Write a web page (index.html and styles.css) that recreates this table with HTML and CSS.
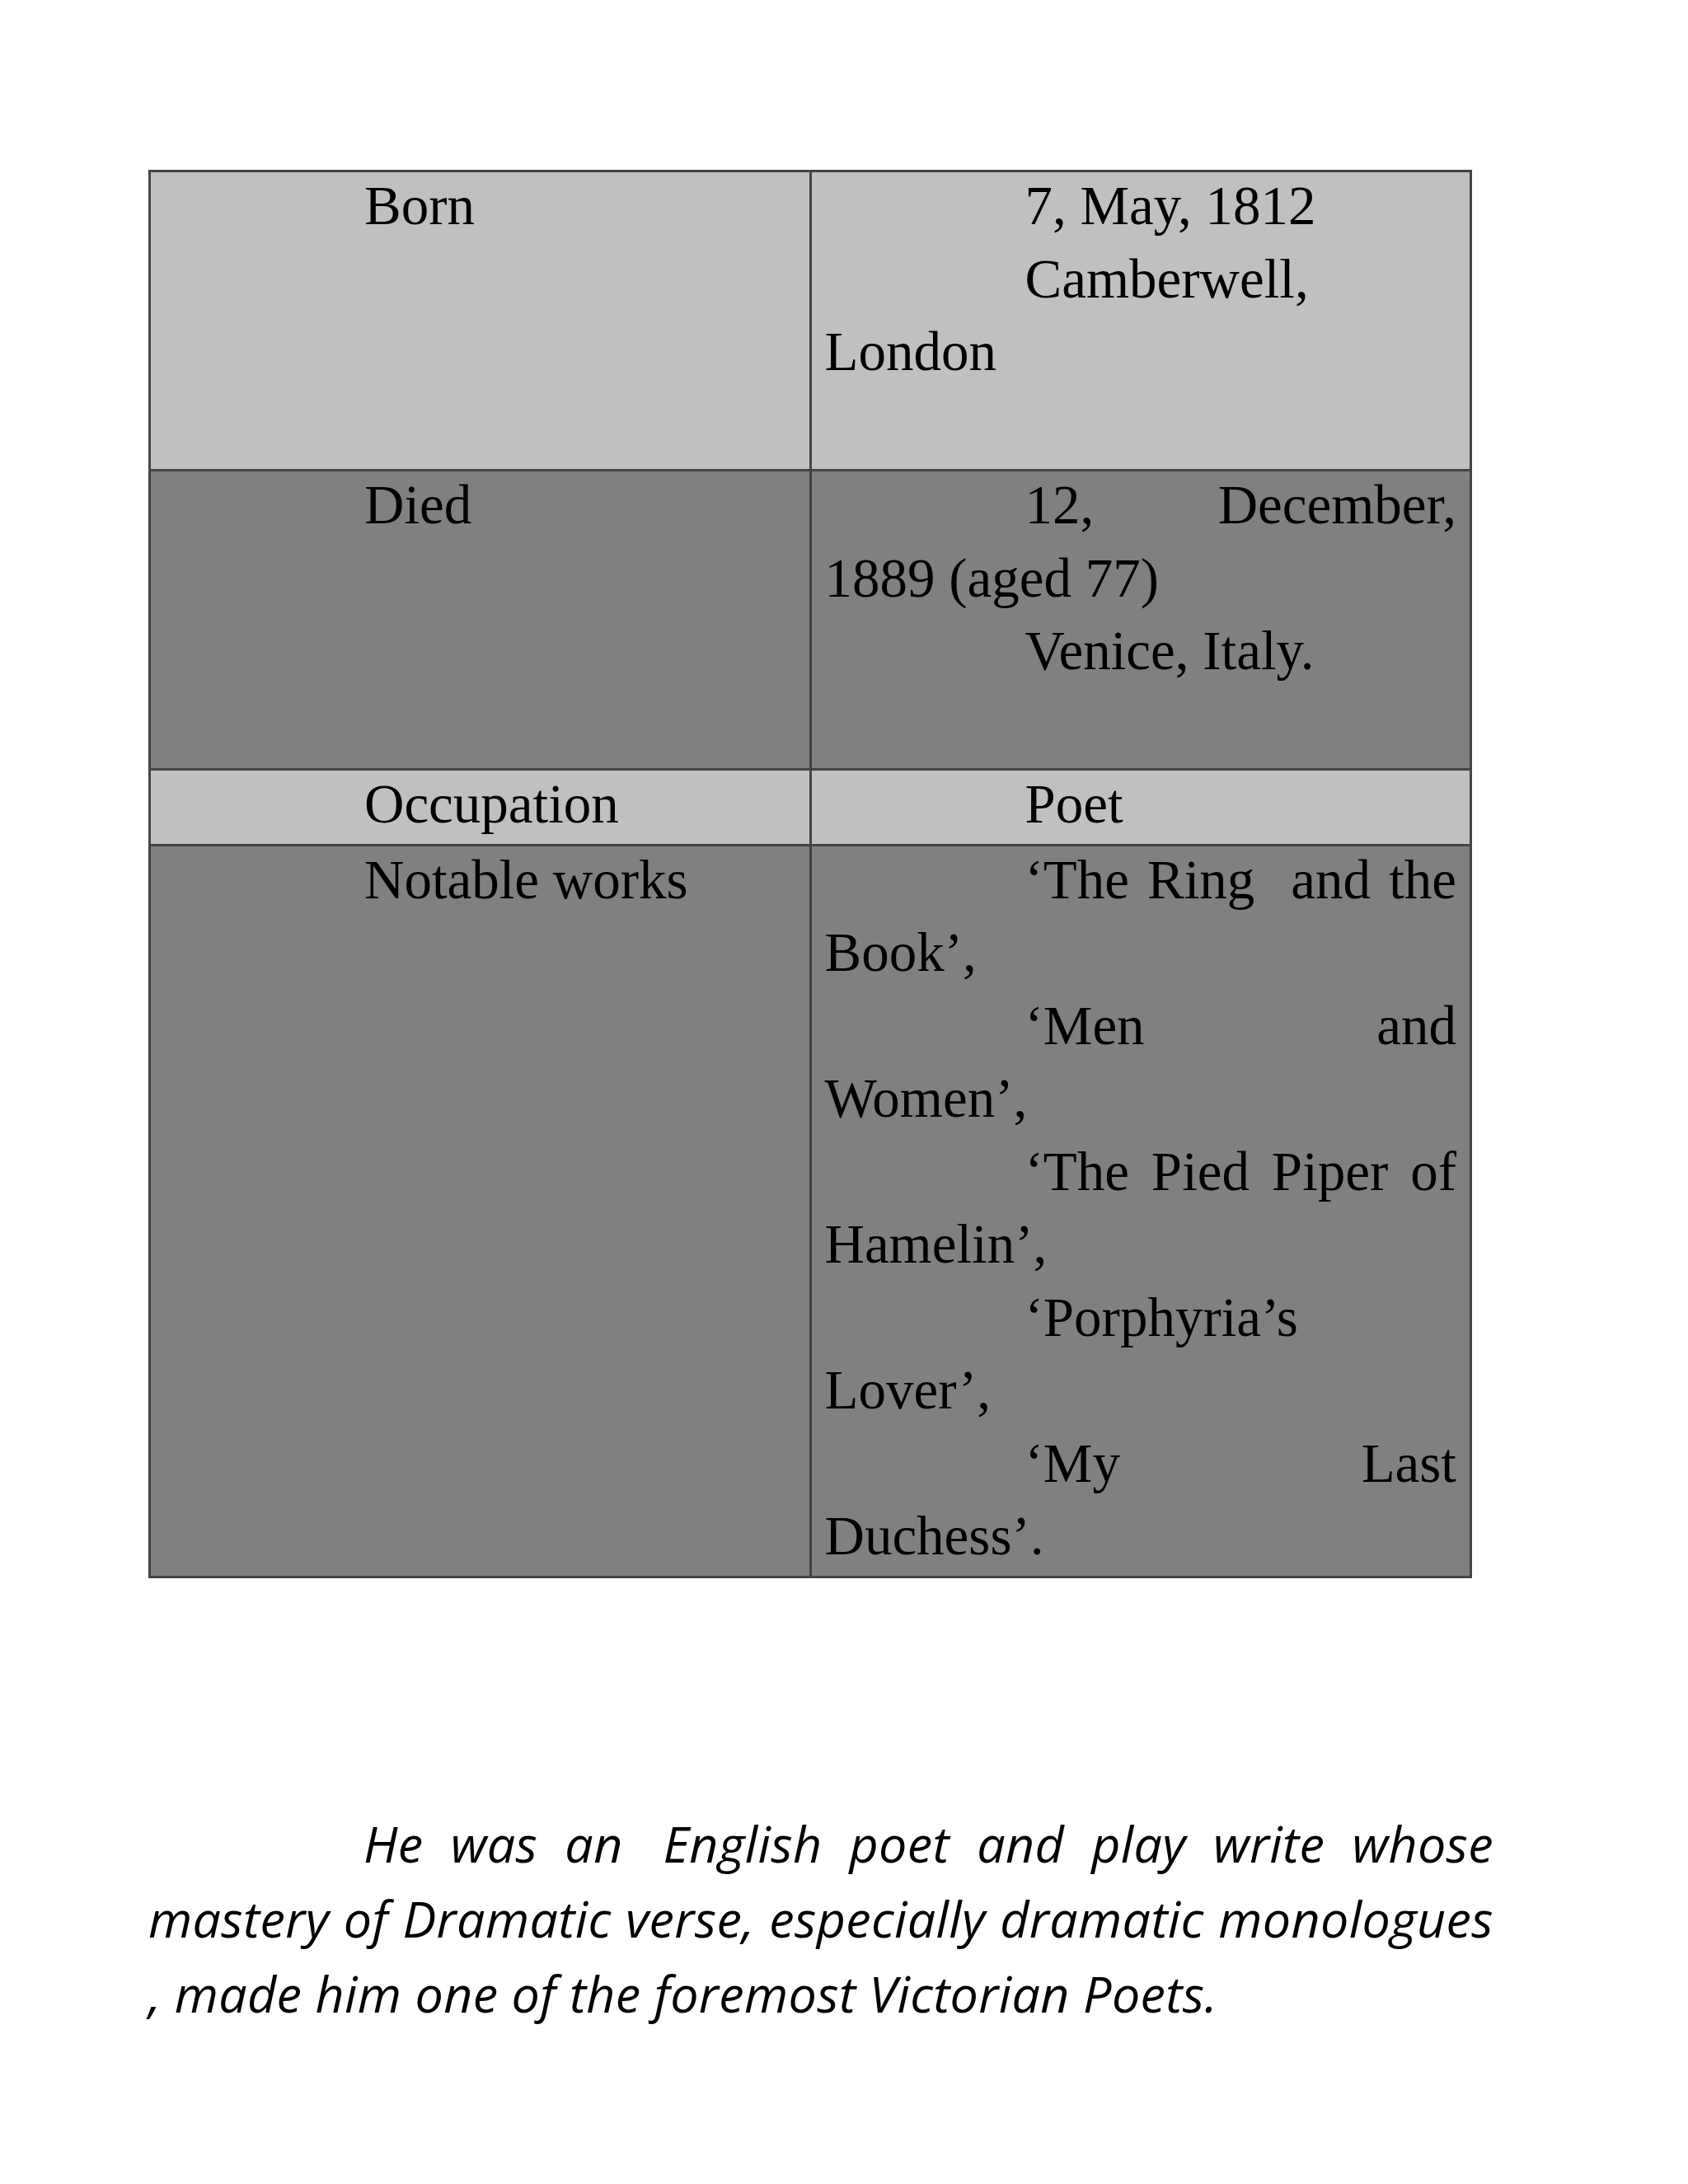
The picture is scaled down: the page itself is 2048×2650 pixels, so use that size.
FILE: index.html
```html
<!DOCTYPE html>
<html lang="en">
<head>
<meta charset="utf-8">
<title>Robert Browning</title>
<link rel="stylesheet" href="styles.css">
</head>
<body>
<main class="page">
  <table class="facts">
    <colgroup><col class="col-half"><col class="col-half"></colgroup>
    <tr class="row-light row-tall">
      <td><p>Born</p></td>
      <td><p>7, May, 1812</p><p>Camberwell, London</p></td>
    </tr>
    <tr class="row-dark row-tall">
      <td><p>Died</p></td>
      <td><p>12, December, 1889 (aged 77)</p><p>Venice, Italy.</p></td>
    </tr>
    <tr class="row-light">
      <td><p>Occupation</p></td>
      <td><p>Poet</p></td>
    </tr>
    <tr class="row-dark">
      <td><p>Notable works</p></td>
      <td>
        <p>‘The Ring&nbsp; and the Book’,</p>
        <p class="break-justify">‘Men and<br>Women’,</p>
        <p>‘The Pied Piper of Hamelin’,</p>
        <p>‘Porphyria’s Lover’,</p>
        <p>‘My Last Duchess’.</p>
      </td>
    </tr>
  </table>

  <p class="summary">
    <span class="line">He was an&#8197; English poet and play write whose</span>
    <span class="line">mastery of Dramatic verse, especially dramatic monologues</span>
    <span class="line line-last">, made him one of the foremost Victorian Poets.</span>
  </p>
</main>
</body>
</html>
```

FILE: styles.css
```css
html, body {
  margin: 0;
  padding: 0;
  background: #ffffff;
}

.page {
  padding: 206px 0 0 180px;
  width: 1640px;
}

.facts {
  width: 1606px;
  table-layout: fixed;
  border-collapse: collapse;
  border: 3px solid #444444;
  font-family: "Liberation Serif", "Times New Roman", serif;
  font-size: 67px;
  line-height: 88.5px;
  color: #000000;
}

.col-half {
  width: 50%;
}

.facts td {
  border: 3px solid #444444;
  padding: 0 16px 4px 16px;
  vertical-align: top;
}

.facts p {
  margin: 0;
  text-indent: 243px;
  text-align: justify;
}

.facts p.break-justify {
  text-align-last: justify;
}

.facts td p:first-child {
  margin-top: -4px;
}

.row-light td {
  background: #c0c0c0;
}

.row-dark td {
  background: #808080;
}

.row-tall td {
  height: 356px;
}

.summary {
  margin: 276px 0 0 0;
  width: 1632px;
  font-family: "Open Sans", "Lato", sans-serif;
  font-style: italic;
  font-size: 61px;
  letter-spacing: 0.35px;
  line-height: 91px;
  color: #000000;
}

.line {
  display: block;
  text-align: justify;
  text-align-last: justify;
}

.line:first-child {
  text-indent: 261px;
}

.line-last {
  text-align-last: auto;
}
```
